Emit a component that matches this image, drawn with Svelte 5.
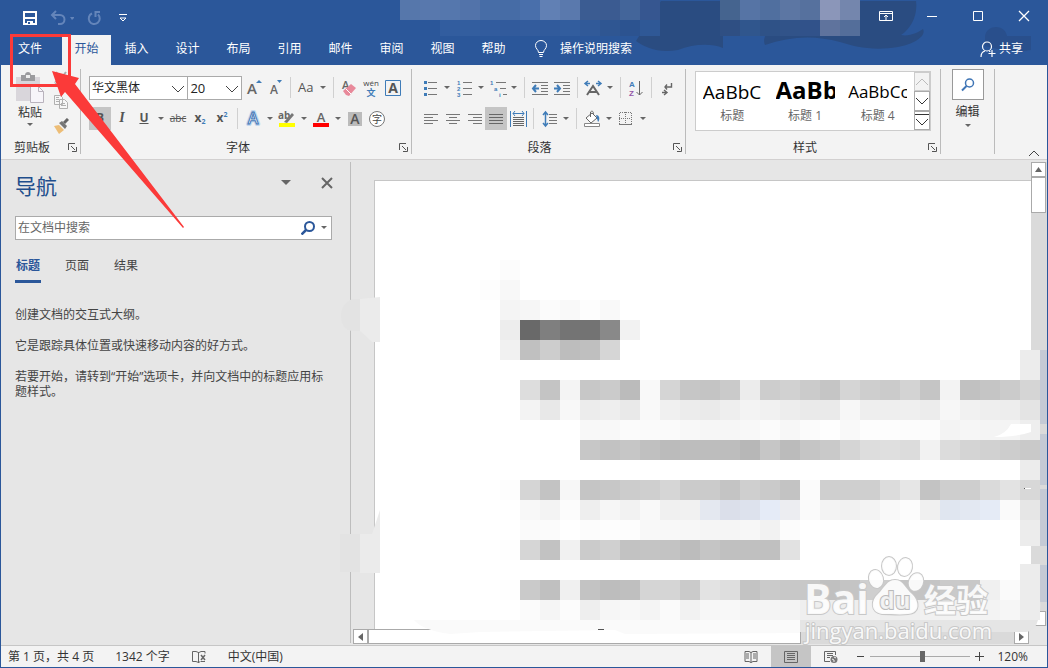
<script>
	const tabs = ['文件', '开始', '插入', '设计', '布局', '引用', '邮件', '审阅', '视图', '帮助'];
	const navTabs = ['标题', '页面', '结果'];
	const hints = [
		'创建文档的交互式大纲。',
		'它是跟踪具体位置或快速移动内容的好方式。',
		'若要开始，请转到“开始”选项卡，并向文档中的标题应用标题样式。'
	];
	const styles = [
		{ name: '标题', sample: 'AaBbC', kind: 'plain' },
		{ name: '标题 1', sample: 'AaBb', kind: 'heavy' },
		{ name: '标题 4', sample: 'AaBbCc', kind: 'small' }
	];

	let activeTab = '开始';
	let activeNav = '标题';
	let font = '华文黑体';
	let size = '20';
	let zoom = 52;
	let query = '';

	// blurred-out blocks: 20px cells, one or three byte colours, '-' is empty
	const pageRows = [
		{ x: 500, y: 260, cells: 'fc' },
		{ x: 480, y: 280, cells: 'fd f8' },
		{ x: 500, y: 300, cells: 'f4 f6 fb f9 fd f9' },
		{ x: 500, y: 320, cells: 'ed 69 7f 74 73 89 f2' },
		{ x: 500, y: 340, cells: 'f1 c0 cd bd bf d6' },
		{ x: 520, y: 380, cells: 'dd c4 f4 c7 cb bb f9 d5 c6 c4 ca ec cd d1 cb c5 d5 ce cb d3 c5 f3 c1 c5 cb d5' },
		{ x: 520, y: 400, cells: 'f3 e8 f8 ec ee e9 f9 f0 ec ea ee f3 f1 ed ea ea f7 ee ee ef ec f7 f1 ee ed e4' },
		{ x: 580, y: 420, cells: 'f8 f8 fb fa fa f8 f6 f6 f8 fb f7 fb fe f9 fd fd fc fc f3 f6 f4 f4 ee' },
		{ x: 580, y: 440, cells: 'c7 c2 c6 c0 bb bd bd bd b7 c6 bb c5 c9 d5 dd df dc f2 dc d4 d1 cd c9' },
		{ x: 500, y: 480, cells: 'fd d5 c3 f7 c5 c7 cc cf d6 cb cb c4 cf ca c3 fb cf cf cf dc e6 c3 ce ce da e3 d8' },
		{ x: 520, y: 500, cells: 'f8 f3 fc ee f6 f2 f9 f0 f1 e4e8f0 dbdfea dde2ed e5ebf7 ecedf1 fa f3 f1 f3 f9 fc f0 e0e6f0 e3e8f2 e5ebf6 fa e6' },
		{ x: 520, y: 520, cells: 'fa fb - fc fd fd f8 f8 f7 f5 f5 f7 f2 fc' },
		{ x: 500, y: 540, cells: 'fe d6 c2 f1 cb d0 c2 c4 c3 bc c5 c0 c0 c0 e2' },
		{ x: 500, y: 580, cells: 'fe ca c0 f0 c3 bd bf d5 d5 ca e3 de c3 ca c8 c8 c0 c4 cf cc c4 c4 ca c8 f0 fa' },
		{ x: 520, y: 600, cells: 'fb f5 fc ee f6 f8 f4 fa f2 f7 f8 f4 f4 f3 ef ed ee f1 ee ef f1 f2 f3 f3 f6 ec' }
	];
	const titleRows = [
		{ x: 400, y: 0, cells: '5677ab 5878ad 5577ad 5273aa 476da7 466ca6 496fab 6180b4 5a79ad 3b5c92 3b5b91 43659a 365690' },
		{ x: 720, y: 0, cells: '45648f 5674a5 506f9f 5c76a3 56719e 8b96b9 7486ad' },
		{ x: 440, y: 20, cells: '325d9f 335e9f 325c9e 325b9c 335c9d 315b9c 325d9e 315a99 2f5692 2c5390 2f5896' },
		{ x: 720, y: 20, cells: '2f4f83 30568d 2f5287 315389 31528a 5f739d 546e9a' }
	];

	function toCells(rows) {
		return rows.flatMap((row) =>
			row.cells
				.split(' ')
				.map((c, i) => ({
					x: row.x + i * 20,
					y: row.y,
					fill: '#' + (c.length === 2 ? c.repeat(3) : c),
					empty: c === '-'
				}))
				.filter((cell) => !cell.empty)
		);
	}

	const pageCells = toCells(pageRows);
	const titleCells = toCells(titleRows);
</script>

{#snippet caret(label)}
	<button class="caret" aria-label={label}>
		<svg width="6" height="4" viewBox="0 0 6 4"><path d="M0 0h6L3 3z" fill="#666" /></svg>
	</button>
{/snippet}

{#snippet launcher(label)}
	<button class="launcher" aria-label={label}>
		<svg width="9" height="9" viewBox="0 0 9 9" fill="none" stroke="#555">
			<path d="M.5 7V.5H7M3 3l4 4M8.500 4v4.500H4" />
		</svg>
	</button>
{/snippet}

{#snippet chevron()}
	<svg class="chevron" width="14" height="8" viewBox="0 0 14 8" fill="none" stroke="#444">
		<path d="M1 1l6 6 6-6" />
	</svg>
{/snippet}

<div class="window">
	<header>
		<svg class="smudge" width="1046" height="65" aria-hidden="true">
			<path
				d="M660 1H915c2 14-5 28-15 34 8 2 18-3 22-6 4 8-12 16-25 18-25 4-42 0-58-5-25-7-50-6-75 3-3-6 2-14 8-19l-50 6v16c-12-5-30-4-45 2-20 3-32-2-42-9z"
				fill="#2a4c81"
			/>
			<path d="M984 36c2-12 20-12 22 0l24 0v14c-15 3-30 0-46-4z" fill="#294f8c" />
			{#each titleCells as c}
				<rect x={c.x - 1} y={c.y} width="20" height={c.y ? 16 : 20} fill={c.fill} />
			{/each}
		</svg>
		<div class="title-bar">
			<div class="quick">
				<button aria-label="保存">
					<svg width="16" height="16" viewBox="0 0 16 16" fill="none" stroke="#fff" stroke-width="2">
						<path d="M2 2h12v12H2zM2 8h12" /><path d="M5 11h6v3H5z" fill="#fff" stroke="none" /><path d="M6 12h2v2H6z" fill="#2b579a" stroke="none" />
					</svg>
				</button>
				<button class="dim undo" aria-label="撤消">
					<svg width="24" height="16" viewBox="0 0 24 16" fill="none" stroke="#6485ba" stroke-width="2">
						<path d="M6 1L2 5l4 4M2 5h8a4 4 0 0 1 0 9H8" /><path d="M20 7h5l-3 3z" fill="#6485ba" stroke="none" />
					</svg>
				</button>
				<button class="dim" aria-label="重复">
					<svg width="16" height="16" viewBox="0 0 16 16" fill="none" stroke="#6485ba" stroke-width="2">
						<path d="M6 3.500a5.500 5.500 0 1 0 6 1M14 2H9.500v5" />
					</svg>
				</button>
				<button aria-label="自定义快速访问工具栏">
					<svg width="10" height="10" viewBox="0 0 10 10" fill="none" stroke="#fff">
						<path d="M1 1.500h8M2 5l3 3 3-3z" />
					</svg>
				</button>
			</div>
			<div class="controls">
				<button aria-label="功能区显示选项">
					<svg width="14" height="12" viewBox="0 0 14 12" fill="none" stroke="#fff">
						<path d="M.5 1.500h13v9H.500zM1 3.500h12M7 10V5M5 7l2-2 2 2" />
					</svg>
				</button>
				<button aria-label="最小化">
					<svg width="12" height="12" viewBox="0 0 12 12" stroke="#fff"><path d="M1 6.500h10" /></svg>
				</button>
				<button aria-label="最大化">
					<svg width="12" height="12" viewBox="0 0 12 12" fill="none" stroke="#fff"><path d="M1.500 1.500h9v9h-9z" /></svg>
				</button>
				<button aria-label="关闭">
					<svg width="12" height="12" viewBox="0 0 12 12" stroke="#fff" stroke-width="1.300"><path d="M1 1l10 10M11 1L1 11" /></svg>
				</button>
			</div>
		</div>
		<div class="tab-bar">
			{#each tabs as tab}
				<button class="tab" class:file={tab === '文件'} class:active={tab === activeTab} on:click={() => (activeTab = tab)}>{tab}</button>
			{/each}
			<button class="tell-me">
				<svg width="14" height="18" viewBox="0 0 14 18" fill="none" stroke="#fff">
					<path d="M4.500 12.500c0-3-3-3.500-3-7a5.500 5 0 0 1 11 0c0 3.500-3 4-3 7zM5 14.500h4M5.500 16.500h3" />
				</svg>
				操作说明搜索
			</button>
			<button class="share">
				<svg width="16" height="16" viewBox="0 0 16 16" fill="none" stroke="#fff" stroke-width="1.200">
					<circle cx="7" cy="5.500" r="4.500" /><path d="M1 16c0-4 2-5.500 4-6M9 10c1 0 1 1 1 1M12 9v7M8.500 12.500h7" />
				</svg>
				共享
			</button>
		</div>
	</header>

	<section class="ribbon" aria-label="功能区">
		<div class="group clipboard">
			<div class="group-body">
				<button class="paste">
					<svg width="30" height="32" viewBox="0 0 30 32">
						<path d="M1 6h24v24H1z" fill="#d9d6db" />
						<path d="M6 4h4c0-4 6-4 6 0h4v6H6z" fill="#9b9b9e" /><path d="M11 4h4v3h-4z" fill="#eee" />
						<path d="M15.500 15.500h8l5 5v11h-13z" fill="#f7f5fa" stroke="#b9b3bd" /><path d="M23.500 15.500v5h5" fill="none" stroke="#b9b3bd" />
					</svg>
					<span>粘贴</span>
					<svg width="6" height="4" viewBox="0 0 6 4"><path d="M0 0h6L3 3z" fill="#666" /></svg>
				</button>
				<div class="clip-tools">
					<button aria-label="剪切">
						<svg width="16" height="16" viewBox="0 0 16 16" fill="none" stroke="#aaa" stroke-width="2">
							<path d="M3 2l7 9M13 2L6 11" /><circle cx="4" cy="12.500" r="2" stroke-width="1" /><circle cx="12" cy="12.500" r="2" stroke-width="1" />
						</svg>
					</button>
					<button aria-label="复制">
						<svg width="16" height="16" viewBox="0 0 16 16" fill="#f7f7f7" stroke="#b0b0b0">
							<path d="M1.500 1.500h6l2 2v7h-8zM6.500 5.500h5l3 3v6h-8zM3 5.500h3M3 7.500h3M8 9.500h4M8 11.500h5M3 3.500h3" />
						</svg>
					</button>
					<button aria-label="格式刷">
						<svg width="16" height="16" viewBox="0 0 16 16">
							<path d="M1 8l5-1 5 5-5 4z" fill="#edbd76" /><path d="M6 5l6 6 2-3-5-5z" fill="#777" /><path d="M11 5l4-4" stroke="#666" stroke-width="3" />
						</svg>
					</button>
				</div>
			</div>
			<div class="group-label">剪贴板{@render launcher('剪贴板选项')}</div>
		</div>

		<div class="group font">
			<div class="group-body rows">
				<div class="row">
					<label class="combo family">
						<select bind:value={font} aria-label="字体"><option>华文黑体</option><option>宋体</option></select>
						{@render chevron()}
					</label>
					<label class="combo size">
						<select bind:value={size} aria-label="字号"><option>20</option><option>22</option></select>
						{@render chevron()}
					</label>
					<button class="tool" aria-label="增大字号">
						<svg width="22" height="22"><text x="5" y="17" font-size="15" font-weight="600" fill="#666">A</text><path d="M14 6l3-3 3 3z" fill="#3f7cb8" /></svg>
					</button>
					<button class="tool" aria-label="减小字号">
						<svg width="22" height="22"><text x="6" y="17" font-size="12" font-weight="600" fill="#666">A</text><path d="M13 3h5l-2.500 3z" fill="#3f7cb8" /></svg>
					</button>
					<i class="sep"></i>
					<button class="tool" aria-label="更改大小写">
						<svg width="22" height="22"><text x="3" y="15" font-size="13" fill="#555">Aa</text></svg>
					</button>
					{@render caret('大小写选项')}
					<i class="sep"></i>
					<button class="tool" aria-label="清除所有格式">
						<svg width="22" height="22"><text x="4" y="12" font-size="11" font-weight="600" fill="#666">A</text><path d="M5 14l8-7 5 4-7 8-3-1z" fill="#e8899a" /><path d="M8 12l5 5" stroke="#fff" /></svg>
					</button>
					<button class="tool" aria-label="拼音指南">
						<svg width="22" height="22"><text x="11" y="9" font-size="8" text-anchor="middle" fill="#444">wén</text><text x="11" y="19" font-size="9" font-weight="700" text-anchor="middle" fill="#3f7cb8">文</text></svg>
					</button>
					<button class="tool" aria-label="字符边框">
						<svg width="22" height="22"><path d="M3.500 3.500h15v15h-15z" fill="none" stroke="#3f7cb8" /><text x="11" y="16" font-size="14" font-weight="700" text-anchor="middle" fill="#555">A</text></svg>
					</button>
				</div>
				<div class="row">
					<button class="tool pressed glyph bold">B</button>
					<button class="tool glyph italic">I</button>
					<button class="tool glyph underline">U</button>
					{@render caret('下划线样式')}
					<button class="tool glyph strike">abc</button>
					<button class="tool glyph bold">x<sub>2</sub></button>
					<button class="tool glyph bold">x<sup>2</sup></button>
					<i class="sep"></i>
					<button class="tool" aria-label="文本效果">
						<svg width="22" height="22"><text x="11" y="16" font-size="16" text-anchor="middle" fill="#fff" stroke="#c3d8ef" stroke-width="4" stroke-linejoin="round">A</text><text x="11" y="16" font-size="16" font-weight="600" text-anchor="middle" fill="#fff" stroke="#3f75b5" stroke-width="1">A</text></svg>
					</button>
					{@render caret('文本效果选项')}
					<button class="tool" aria-label="突出显示">
						<svg width="22" height="22"><text x="2" y="11" font-size="10" font-weight="700" fill="#666">ab</text><path d="M8 14l8-9 2 2-7 8z" fill="#777" /><path d="M3 15h16v4H3z" fill="#ff0" /></svg>
					</button>
					{@render caret('突出显示颜色')}
					<button class="tool" aria-label="字体颜色">
						<svg width="22" height="22"><text x="11" y="14" font-size="13" font-weight="600" text-anchor="middle" fill="#666">A</text><path d="M3 15h16v4H3z" fill="#f00" /></svg>
					</button>
					{@render caret('更多颜色')}
					<button class="tool" aria-label="字符底纹">
						<svg width="22" height="22"><path d="M4 4h14v14H4z" fill="#bbb" /><text x="11" y="16" font-size="14" font-weight="600" text-anchor="middle" fill="#555">A</text></svg>
					</button>
					<button class="tool" aria-label="带圈字符">
						<svg width="22" height="22"><circle cx="11" cy="11" r="7.500" fill="#fff" stroke="#777" /><text x="11" y="15" font-size="10" text-anchor="middle" fill="#444">字</text></svg>
					</button>
				</div>
			</div>
			<div class="group-label">字体{@render launcher('字体选项')}</div>
		</div>

		<div class="group para">
			<div class="group-body rows">
				<div class="row">
					<button class="tool" aria-label="项目符号">
						<svg width="22" height="22"><path d="M9 5.500h9M9 11.500h9M9 17.500h9" stroke="#777" /><path d="M5 4h3v3H5zM5 10h3v3H5zM5 16h3v3H5z" fill="#3f7cb8" /></svg>
					</button>
					{@render caret('项目符号库')}
					<button class="tool" aria-label="编号">
						<svg class="numerals" width="22" height="22"><path d="M10 5.500h9M10 11.500h9M10 17.500h9" stroke="#777" /><text x="4" y="8">1</text><text x="4" y="14">2</text><text x="4" y="20">3</text></svg>
					</button>
					{@render caret('编号库')}
					<button class="tool" aria-label="多级列表">
						<svg class="numerals" width="22" height="22"><path d="M9 5.500h10M13 11.500h6M16 17.500h4" stroke="#777" /><text x="3" y="8">1</text><text x="7" y="14">a</text><text x="12" y="20">i</text></svg>
					</button>
					{@render caret('列表库')}
					<i class="sep"></i>
					<button class="tool" aria-label="减少缩进量">
						<svg width="22" height="22"><path d="M3 5.500h16M12 8.500h7M12 11.500h7M12 14.500h7M3 17.500h16" stroke="#777" /><path d="M10 11.500H4M7 8l-3 3.500L7 15" fill="none" stroke="#3f7cb8" stroke-width="2" /></svg>
					</button>
					<button class="tool" aria-label="增加缩进量">
						<svg width="22" height="22"><path d="M3 5.500h16M12 8.500h7M12 11.500h7M12 14.500h7M3 17.500h16" stroke="#777" /><path d="M3 11.500h6M6 8l3 3.500L6 15" fill="none" stroke="#3f7cb8" stroke-width="2" /></svg>
					</button>
					<i class="sep"></i>
					<button class="tool" aria-label="中文版式">
						<svg width="22" height="22"><path d="M5 18l6-9 6 9M7 15h8" fill="none" stroke="#666" stroke-width="2" /><path d="M8 6.500H4M6 4L3 6.500 6 9M14 6.500h4M16 4l3 2.500L16 9" fill="none" stroke="#3f7cb8" stroke-width="1.500" /></svg>
					</button>
					{@render caret('中文版式选项')}
					<i class="sep"></i>
					<button class="tool" aria-label="排序">
						<svg class="letters" width="22" height="22"><text x="4" y="10" fill="#3f7cb8">A</text><text x="4" y="19" fill="#9456a8">Z</text><path d="M14.500 4v14M11.500 15l3 3 3-3" fill="none" stroke="#666" /></svg>
					</button>
					<i class="sep"></i>
					<button class="tool" aria-label="显示编辑标记">
						<svg width="22" height="22" fill="none" stroke="#666" stroke-width="1.400"><path d="M15.500 6v4H9M11 7.500L9 10l2 2.500M6 15.500h5M8 13l3 2.500L8 18" /></svg>
					</button>
				</div>
				<div class="row">
					<button class="tool" aria-label="左对齐">
						<svg width="22" height="22" stroke="#777"><path d="M5 6.500h14M5 9.500h9M5 12.500h14M5 15.500h9" /></svg>
					</button>
					<button class="tool" aria-label="居中">
						<svg width="22" height="22" stroke="#777"><path d="M5 6.500h14M8 9.500h8M5 12.500h14M8 15.500h8" /></svg>
					</button>
					<button class="tool" aria-label="右对齐">
						<svg width="22" height="22" stroke="#777"><path d="M5 6.500h14M10 9.500h9M5 12.500h14M10 15.500h9" /></svg>
					</button>
					<button class="tool pressed" aria-label="两端对齐">
						<svg width="22" height="22" stroke="#666"><path d="M4 6.500h14M4 9.500h14M4 12.500h14M4 15.500h14" /></svg>
					</button>
					<button class="tool" aria-label="分散对齐">
						<svg width="22" height="22" stroke="#666"><path d="M6 9.500h11M6 11.500h11M6 13.500h11M6 15.500h11M6 17.500h11" /><path d="M3.500 3v16M19.500 3v16M6 5.500h11M8 3L6 5.500 8 8M15 3l2 2.500L15 8" fill="none" stroke="#3f7cb8" /></svg>
					</button>
					<i class="sep"></i>
					<button class="tool" aria-label="行距">
						<svg width="22" height="22" stroke="#777"><path d="M11 6.500h8M11 9.500h8M11 12.500h8M11 15.500h8" /><path d="M7.500 4v14M5 7l2.500-3L10 7M5 15l2.500 3L10 15" fill="none" stroke="#3f7cb8" stroke-width="1.500" /></svg>
					</button>
					{@render caret('行距选项')}
					<i class="sep"></i>
					<button class="tool" aria-label="底纹">
						<svg width="22" height="22"><path d="M5 10l6-5 5 5-6 5z" fill="#fff" stroke="#666" /><path d="M9.500 9V4c2-2 3 0 3 2" fill="none" stroke="#666" /><path d="M15 7c4 0 4 5 2 7z" fill="#3f7cb8" /><path d="M3.500 15.500h15v3h-15z" fill="#fff" stroke="#888" /></svg>
					</button>
					{@render caret('底纹颜色')}
					<button class="tool" aria-label="边框">
						<svg width="22" height="22" fill="none" stroke="#777"><path d="M4.500 16V4.500h12V16M10.500 4v12M4 10.500h12" stroke-dasharray="1 1" /><path d="M4 16.500h13" /></svg>
					</button>
					{@render caret('边框选项')}
				</div>
			</div>
			<div class="group-label">段落{@render launcher('段落设置')}</div>
		</div>

		<div class="group styles">
			<div class="group-body">
				<div class="gallery">
					{#each styles as style}
						<button class="style-item">
							<span class="sample {style.kind}">{style.sample}</span>
							<span class="style-name">{style.name}</span>
						</button>
					{/each}
					<div class="scrollers">
						<button aria-label="上一行" disabled><svg width="14" height="8" viewBox="0 0 14 8" fill="none" stroke="#bbb"><path d="M1 7l6-6 6 6" /></svg></button>
						<button aria-label="下一行"><svg width="14" height="8" viewBox="0 0 14 8" fill="none" stroke="#333"><path d="M1 1l6 6 6-6" /></svg></button>
						<button aria-label="其他"><svg width="14" height="14" viewBox="0 0 14 14" fill="none" stroke="#333"><path d="M0 1.500h14M1 6l6 6 6-6" /></svg></button>
					</div>
				</div>
			</div>
			<div class="group-label">样式{@render launcher('样式窗格')}</div>
		</div>

		<div class="group edit">
			<button class="edit-btn">
				<span class="edit-icon">
					<svg width="14" height="14" viewBox="0 0 14 14" fill="none" stroke="#3f75b5" stroke-width="1.500"><circle cx="8.500" cy="5" r="4" /><path d="M5.500 8L1 12.500" stroke-width="2" /></svg>
				</span>
				编辑
				<svg width="6" height="4" viewBox="0 0 6 4"><path d="M0 0h6L3 3z" fill="#666" /></svg>
			</button>
		</div>
		<button class="collapse" aria-label="折叠功能区">
			<svg width="12" height="8" viewBox="0 0 12 8" fill="none" stroke="#444"><path d="M1 7l5-5 5 5" /></svg>
		</button>
	</section>

	<main>
		<aside class="nav-pane">
			<div class="nav-head">
				<h2>导航</h2>
				<button aria-label="任务窗格选项"><svg width="10" height="6" viewBox="0 0 10 6"><path d="M0 0h10L5 5z" fill="#666" /></svg></button>
				<button aria-label="关闭窗格"><svg width="12" height="12" viewBox="0 0 12 12" stroke="#666" stroke-width="2"><path d="M1 1l10 10M11 1L1 11" /></svg></button>
			</div>
			<div class="search">
				<input type="text" placeholder="在文档中搜索" aria-label="在文档中搜索" bind:value={query} />
				<button aria-label="搜索"><svg width="14" height="14" viewBox="0 0 14 14" fill="none" stroke="#2b579a" stroke-width="2"><circle cx="8.500" cy="5.500" r="4.500" /><path d="M5 9l-4.500 4.500" stroke-width="2.500" /></svg></button>
				<button aria-label="搜索选项"><svg width="6" height="4" viewBox="0 0 6 4"><path d="M0 0h6L3 3z" fill="#666" /></svg></button>
			</div>
			<div class="nav-tabs">
				{#each navTabs as tab}
					<button class:active={tab === activeNav} on:click={() => (activeNav = tab)}>{tab}</button>
				{/each}
			</div>
			<div class="hints">
				{#each hints as hint}
					<p>{hint}</p>
				{/each}
			</div>
		</aside>

		<div class="doc">
			<div class="canvas"><div class="page"></div></div>
			<div class="vscroll">
				<button aria-label="向上滚动"><svg width="7" height="5" viewBox="0 0 7 5"><path d="M0 5h7L3.500 0z" fill="#666" /></svg></button>
				<span class="vthumb"></span>
				<span class="grow"></span>
				<button aria-label="向下滚动"></button>
			</div>
			<div class="hscroll">
				<button aria-label="向左滚动"><svg width="5" height="8" viewBox="0 0 5 8"><path d="M5 0v8L0 4z" fill="#666" /></svg></button>
				<span class="hthumb"></span>
				<span class="grow"></span>
				<button aria-label="向右滚动"><svg width="5" height="8" viewBox="0 0 5 8"><path d="M0 0v8l5-4z" fill="#666" /></svg></button>
			</div>
		</div>

		<svg class="mosaic" viewBox="1 160 1046 485" width="1046" height="485" aria-hidden="true">
			<path d="M360 299h-8q-12 6-11 18 1 13 11 14h8z" fill="#e3e3e3" />
			<path d="M360 299l20-2v45h-8q-6-6-12-11zM380 510v63h-20v-39h12z" fill="#ebebeb" />
			<path d="M340 534h20v38h-20z" fill="#e3e3e3" />
			<path d="M1020 350h20v196h-20z" fill="#ececec" />
			<path d="M1040 350h8v74h-8zM1040 434h8v51h-8zM1040 489h8v57h-8zM1040 565h8v37h-8z" fill="#c4cad5" />
			<path d="M1020 564h20v36q2 22-12 30h-8z" fill="#ececec" />
			<path d="M414 620h386v13l-175 1-10-4-135 2-30 2q-28-4-36-14z" fill="#fafafa" />
			{#each pageCells as c}
				<rect x={c.x} y={c.y} width="20" height="20" fill={c.fill} />
			{/each}
			<path d="M800 620h238q-3 12-12 12H800z" fill="#e5e5e5" />
			<path d="M994 437q12-3 17-13h20v8q-14 5-37 5z" fill="#fff" />
			<path d="M1025 488h6v1h-6z" fill="#fff" /><path d="M1024 488h1v1h-1zM598 629h6v1h-6z" fill="#555" />
			<g class="watermark">
				<ellipse cx="876" cy="579" rx="7" ry="9" transform="rotate(-15 876 579)" />
				<ellipse cx="889" cy="566" rx="7" ry="9" />
				<ellipse cx="905" cy="567" rx="7" ry="9" transform="rotate(10 905 567)" />
				<ellipse cx="916" cy="582" rx="7" ry="9" transform="rotate(20 916 582)" />
				<path d="M895 580c8 0 10 8 17 14 8 8 8 19-4 20-7 1-18 0-26 0-12-2-11-14-4-20 7-7 9-14 17-14z" />
				<text x="804" y="614" font-size="41" font-weight="700">Bai</text>
				<text x="895" y="609" font-size="24" font-weight="700" text-anchor="middle" class="du">du</text>
				<text x="924" y="612" font-size="32" font-weight="700">经验</text>
				<text x="805" y="639" font-size="22">jingyan.baidu.com</text>
			</g>
		</svg>
	</main>

	<footer>
		<span>第 1 页，共 4 页</span>
		<span>1342 个字</span>
		<button aria-label="校对">
			<svg width="16" height="14" viewBox="0 0 16 14" fill="none" stroke="#666"><path d="M7.500 2.500L5 1.500H1.500v10H5l2.500 1 2-1M7.500 2v11M8 2.500l2-1h4v2M10 11.500h4" /><path d="M10 5l4 5M14 5l-4 5" stroke-width="1.500" /></svg>
		</button>
		<span>中文(中国)</span>
		<div class="views">
			<button aria-label="阅读视图">
				<svg width="14" height="14" viewBox="0 0 14 14" fill="none" stroke="#666"><path d="M1 1.500h4l2 1 2-1h4v10H9l-2 1-2-1H1zM7 2v11M2 4h3M2 6h3M2 8h3M9 4h3M9 6h3M9 8h3" /></svg>
			</button>
			<button class="on" aria-label="页面视图">
				<svg width="14" height="14" viewBox="0 0 14 14" fill="none" stroke="#666"><path d="M.5 1.500h13v11H.500zM3 3.500h8M3 5.500h8M3 7.500h8M3 9.500h8" /></svg>
			</button>
			<button aria-label="Web 版式视图">
				<svg width="14" height="14" viewBox="0 0 14 14" fill="none" stroke="#666"><path d="M6 11.500H.500v-10h11V5M3 3.500h6M3 5.500h6M3 7.500h3" /><circle cx="10" cy="9.500" r="3.500" fill="#777" stroke="none" /><path d="M8 9l2 1v2M10 7l2 1" stroke="#f3f3f3" /></svg>
			</button>
		</div>
		<div class="zoom">
			<button aria-label="缩小"><svg width="9" height="9" viewBox="0 0 9 9" stroke="#444"><path d="M1 4.500h7" /></svg></button>
			<input type="range" min="0" max="100" aria-label="显示比例" bind:value={zoom} />
			<button aria-label="放大"><svg width="9" height="9" viewBox="0 0 9 9" stroke="#444"><path d="M0 4.500h9M4.500 0v9" /></svg></button>
			<span>120%</span>
		</div>
	</footer>

	<svg class="marker" width="200" height="240" aria-hidden="true">
		<path d="M11.500 35.500h58v50h-58z" fill="none" stroke="#fb3a39" stroke-width="3" />
		<path d="M52 71l27 7-4 6L184 227l-1 1L65 92l-4 5z" fill="#fb3a39" />
	</svg>
</div>

<style>
	:global(body) {
		margin: 0;
		background: #e6e6e6;
	}

	.window {
		position: relative;
		display: flex;
		flex-direction: column;
		box-sizing: border-box;
		min-height: 100vh;
		border: 1px solid #2b579a;
		border-top: none;
		overflow: hidden;
		background: #e6e6e6;
		color: #333;
		font: 12px/16px 'Open Sans', 'Noto Sans CJK SC', sans-serif;
	}

	button {
		display: flex;
		align-items: center;
		justify-content: center;
		padding: 0;
		border: none;
		background: transparent;
		color: inherit;
		font: inherit;
		cursor: pointer;
	}

	svg {
		display: block;
		flex: none;
	}

	header {
		position: relative;
		background: #2b579a;
		color: #fff;
	}

	.smudge {
		position: absolute;
		top: 0;
		left: 0;
	}

	.title-bar,
	.tab-bar {
		position: relative;
		display: flex;
	}

	.title-bar {
		height: 35px;
		justify-content: space-between;
	}

	.quick {
		display: flex;
		align-items: center;
		gap: 12px;
		padding-left: 21px;
	}

	.quick .undo + button {
		margin-right: 4px;
	}

	.controls {
		display: flex;
	}

	.controls button {
		width: 46px;
		height: 32px;
	}

	.tab-bar {
		height: 30px;
	}

	.tab {
		width: 51px;
		padding-bottom: 2px;
	}

	.tab.file {
		width: 61px;
		padding-right: 3px;
	}

	.tab.active {
		width: 49px;
		background: #f3f3f3;
		color: #2b579a;
	}

	.tell-me {
		gap: 12px;
		margin-left: 15px;
		padding-bottom: 2px;
	}

	.share {
		gap: 3px;
		margin-left: auto;
		margin-right: 24px;
		padding-bottom: 2px;
	}

	.ribbon {
		display: flex;
		height: 94px;
		border-bottom: 1px solid #d2d0d0;
		background: #f3f3f3;
	}

	.group {
		display: flex;
		flex-direction: column;
		box-sizing: border-box;
		margin: 4px 0 5px;
		border-right: 1px solid #bbb;
	}

	.group-body {
		display: flex;
		flex: 1;
		min-height: 0;
	}

	.group-label {
		position: relative;
		height: 15px;
		text-align: center;
		line-height: 18px;
	}

	.launcher {
		position: absolute;
		right: 3px;
		top: 4px;
	}

	.clipboard {
		width: 80px;
	}

	.clipboard .group-label {
		padding-right: 17px;
	}

	.paste {
		flex-direction: column;
		justify-content: flex-start;
		gap: 2px;
		width: 46px;
		padding: 2px 0 0 12px;
	}

	.clip-tools {
		display: flex;
		flex-direction: column;
		gap: 8px;
		padding: 1px 0 0 6px;
	}

	.font {
		width: 331px;
	}

	.font .group-label {
		padding-right: 16px;
	}

	.rows {
		flex-direction: column;
		gap: 8px;
		padding: 7px 7px 0 8px;
	}

	.row {
		display: flex;
		align-items: center;
		height: 23px;
	}

	.combo {
		position: relative;
		box-sizing: border-box;
		height: 24px;
		border: 1px solid #aaa;
		background: #fff;
	}

	.combo.family {
		width: 100px;
	}

	.combo.size {
		width: 55px;
		margin-left: -1px;
	}

	.combo select {
		width: 100%;
		height: 100%;
		padding: 0 2px;
		border: none;
		appearance: none;
		background: transparent;
		color: #222;
		font: inherit;
	}

	.combo.size select {
		font-size: 13px;
	}

	.chevron {
		position: absolute;
		top: 8px;
		right: 2px;
		pointer-events: none;
	}

	.tool {
		width: 22px;
		height: 23px;
	}

	.numerals {
		fill: #3f7cb8;
		font: 700 6px 'Liberation Sans', sans-serif;
	}

	.letters {
		font: 700 8px 'Liberation Sans', sans-serif;
	}

	.pressed {
		background: #c5c5c5;
	}

	.caret {
		width: 12px;
		height: 23px;
	}

	.sep {
		width: 1px;
		height: 21px;
		margin: 0 4px;
		background: #d0d0d0;
	}

	.glyph {
		padding-bottom: 1px;
		color: #555;
	}

	.glyph.bold {
		font-weight: 700;
	}

	.glyph.italic {
		font-family: 'Liberation Serif', serif;
		font-size: 14px;
		font-style: italic;
		font-weight: 700;
	}

	.glyph.underline {
		font-weight: 700;
		text-decoration: underline;
	}

	.glyph.strike {
		font-size: 10px;
		text-decoration: line-through;
	}

	sub,
	sup {
		color: #3f7cb8;
		font-size: 7px;
		line-height: 7px;
	}

	sub {
		align-self: flex-end;
		margin-bottom: 4px;
	}

	sup {
		align-self: flex-start;
		margin-top: 4px;
	}

	.para {
		width: 274px;
	}

	.para .rows {
		padding-left: 7px;
	}

	.para .group-label {
		padding-right: 18px;
	}

	.styles {
		width: 255px;
	}

	.styles .group-body {
		padding: 2px 9px 0;
	}

	.styles .group-label {
		padding-right: 16px;
	}

	.gallery {
		display: flex;
		flex: 1;
		box-sizing: border-box;
		height: 60px;
		border: 1px solid #ccc;
		background: #fff;
	}

	.style-item {
		flex-direction: column;
		flex: 1;
		min-width: 0;
		padding-top: 5px;
		justify-content: flex-start;
	}

	.sample {
		width: 59px;
		height: 31px;
		overflow: hidden;
		color: #000;
		line-height: 30px;
		text-align: left;
		white-space: nowrap;
	}

	.sample.plain {
		font-size: 19px;
	}

	.sample.heavy {
		font-size: 24px;
		font-weight: 700;
		line-height: 26px;
	}

	.sample.small {
		font-size: 17px;
	}

	.style-name {
		color: #666;
	}

	.scrollers {
		display: flex;
		flex-direction: column;
		width: 16px;
	}

	.scrollers button {
		flex: 1;
		border: 1px solid #aaa;
		background: #fff;
	}

	.scrollers button:disabled {
		border-color: #ccc;
		background: #f3f3f3;
	}

	.edit {
		width: 54px;
	}

	.edit-btn {
		flex-direction: column;
		gap: 4px;
	}

	.edit-icon {
		display: flex;
		align-items: center;
		justify-content: center;
		box-sizing: border-box;
		width: 32px;
		height: 31px;
		border: 1px solid #999;
		background: #fff;
	}

	.collapse {
		align-self: flex-end;
		margin: 0 7px 2px auto;
	}

	main {
		position: relative;
		display: flex;
		flex: 1;
	}

	.nav-pane {
		flex: none;
		box-sizing: border-box;
		width: 350px;
		margin: 2px 0;
		padding: 10px 18px 0 14px;
		border-right: 1px solid #bdbdbd;
		color: #444;
	}

	.nav-head {
		display: flex;
		align-items: center;
		gap: 30px;
	}

	.nav-head button {
		padding-bottom: 6px;
	}

	.nav-head button:last-child {
		margin-right: -1px;
	}

	h2 {
		flex: 1;
		margin: 0;
		color: #1f4e8c;
		font-size: 21px;
		font-weight: 400;
		line-height: 28px;
	}

	.search {
		display: flex;
		box-sizing: border-box;
		height: 24px;
		margin-top: 16px;
		padding-right: 4px;
		border: 1px solid #aaa;
		background: #fff;
		gap: 6px;
	}

	.search input {
		flex: 1;
		min-width: 0;
		padding: 0 2px;
		border: none;
		outline: none;
		background: transparent;
		font: inherit;
	}

	.search input::placeholder {
		color: #666;
	}

	.nav-tabs {
		display: flex;
		gap: 23px;
		margin-top: 16px;
	}

	.nav-tabs button {
		width: 26px;
		padding: 2px 0 6px;
		border-bottom: 3px solid transparent;
	}

	.nav-tabs .active {
		border-color: #2b579a;
		color: #2b579a;
		font-weight: 700;
	}

	.hints {
		margin-top: 24px;
		line-height: 15px;
	}

	.hints p {
		margin: 0 0 16px;
	}

	.doc {
		display: grid;
		flex: 1;
		grid-template-columns: 1fr 16px;
		grid-template-rows: 1fr 16px;
	}

	.canvas {
		display: flex;
		padding: 20px 0 0 23px;
	}

	.page {
		flex: 1;
		border: 1px solid #c6c6c6;
		border-width: 1px 0 0 1px;
		background: #fff;
	}

	.vscroll,
	.hscroll {
		display: flex;
		background: #dadada;
	}

	.vscroll {
		flex-direction: column;
		margin: 2px 0 3px;
	}

	.hscroll {
		margin: 0 2px 1px;
	}

	.vscroll button,
	.hscroll button {
		box-sizing: border-box;
		flex: none;
		width: 15px;
		height: 15px;
		border: 1px solid #aaa;
		background: #fff;
	}

	.vthumb,
	.hthumb {
		box-sizing: border-box;
		border: 1px solid #aaa;
		background: #fff;
	}

	.vthumb {
		width: 15px;
		height: 36px;
	}

	.hthumb {
		width: 64%;
	}

	.grow {
		flex: 1;
	}

	.mosaic {
		position: absolute;
		top: 0;
		left: 0;
		pointer-events: none;
	}

	.watermark {
		fill: #fff;
		fill-opacity: 0.9;
		stroke: #c8c8c8;
		stroke-width: 2px;
		paint-order: stroke;
	}

	.watermark .du {
		fill: #f4f4f4;
		stroke: #bbb;
	}

	footer {
		display: flex;
		align-items: center;
		height: 21px;
		padding: 0 19px 0 7px;
		border-top: 1px solid #c6c6c6;
		background: #f3f3f3;
		gap: 21px;
	}

	.views {
		display: flex;
		align-self: stretch;
		margin-left: auto;
	}

	.views button {
		width: 40px;
	}

	.views .on {
		background: #c5c5c5;
	}

	.zoom {
		display: flex;
		align-items: center;
		gap: 5px;
		margin-left: -16px;
	}

	.zoom span {
		margin-left: 8px;
	}

	.zoom input {
		width: 100px;
		height: 12px;
		margin: 0;
		appearance: none;
		background: linear-gradient(#aaa, #aaa) center / 100% 1px no-repeat;
	}

	.zoom input::-webkit-slider-thumb {
		width: 5px;
		height: 11px;
		appearance: none;
		background: #666;
	}

	.marker {
		position: absolute;
		top: 0;
		left: -1px;
		pointer-events: none;
	}
</style>
